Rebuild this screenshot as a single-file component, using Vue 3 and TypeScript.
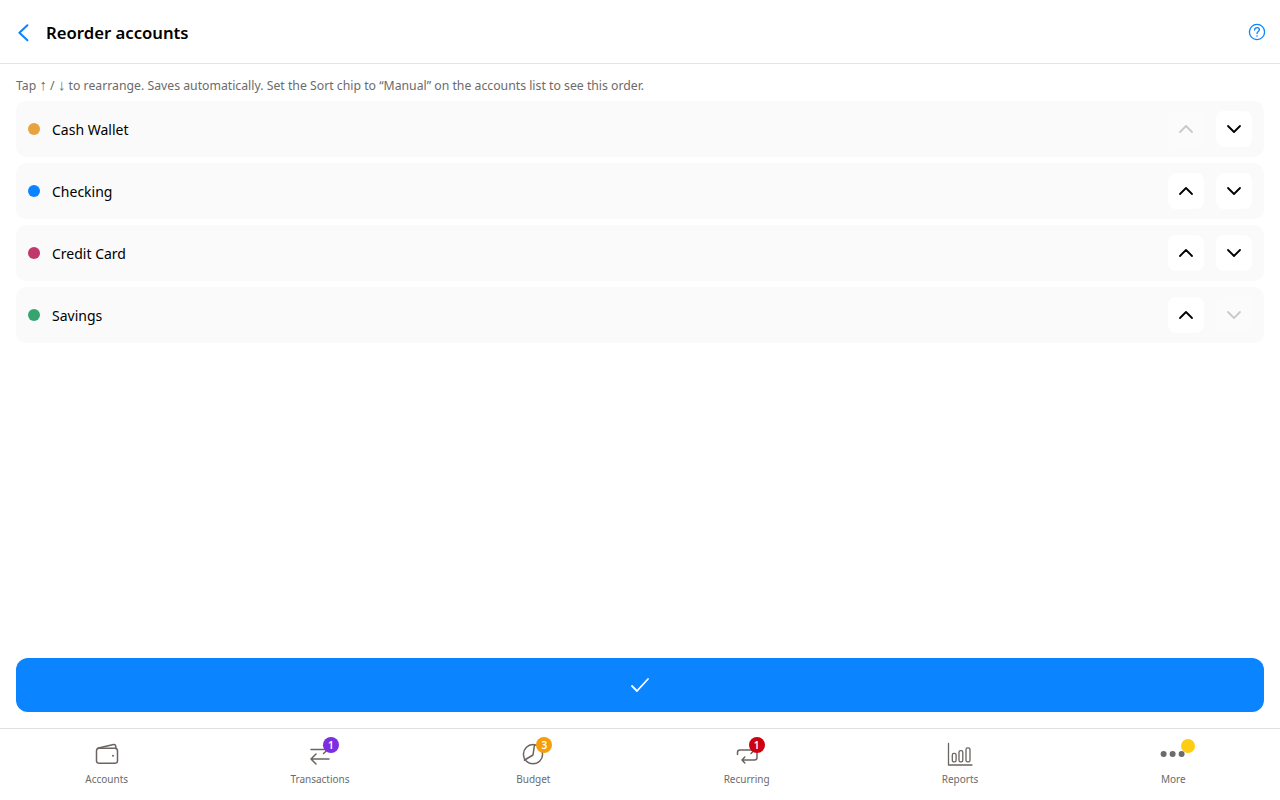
<script setup lang="ts">
interface Account {
  name: string
  color: string
}

const accounts: Account[] = [
  { name: 'Cash Wallet', color: '#e8a33d' },
  { name: 'Checking', color: '#0a84ff' },
  { name: 'Credit Card', color: '#c2386b' },
  { name: 'Savings', color: '#34a56f' },
]

const tabs = [
  { key: 'accounts', label: 'Accounts' },
  { key: 'transactions', label: 'Transactions', badge: '1', badgeColor: '#7c2fe0' },
  { key: 'budget', label: 'Budget', badge: '3', badgeColor: '#f59e0b' },
  { key: 'recurring', label: 'Recurring', badge: '1', badgeColor: '#cc0010' },
  { key: 'reports', label: 'Reports' },
  { key: 'more', label: 'More', dot: true },
]
</script>

<template>
  <div class="screen">
    <header class="topbar">
      <button class="back" aria-label="Back">
        <svg width="16" height="20" viewBox="0 0 16 20" fill="none">
          <path d="M11.4 3.3 L3.4 10.8 L11.4 18.3" stroke="#0a84ff" stroke-width="2.1" stroke-linecap="round" stroke-linejoin="round" />
        </svg>
      </button>
      <h1 class="title">Reorder accounts</h1>
      <button class="help" aria-label="Help">
        <svg width="18" height="18" viewBox="0 0 18 18" fill="none">
          <circle cx="9" cy="9" r="7.6" stroke="#0a84ff" stroke-width="1.3" />
          <path d="M6.6 7 C6.6 5.5 7.7 4.6 9 4.6 C10.4 4.6 11.4 5.6 11.4 6.8 C11.4 8.5 9 8.6 9 10.6" stroke="#0a84ff" stroke-width="1.3" stroke-linecap="round" />
          <circle cx="9" cy="13" r="0.8" fill="#0a84ff" />
        </svg>
      </button>
    </header>

    <main class="content">
      <p class="hint">Tap <span class="glyph">↑</span> / <span class="glyph">↓</span> to rearrange. Saves automatically. Set the Sort chip to “Manual” on the accounts list to see this order.</p>
      <ul class="list">
        <li v-for="(acc, i) in accounts" :key="acc.name" class="row">
          <span class="dot" :style="{ background: acc.color }"></span>
          <span class="name">{{ acc.name }}</span>
          <button class="arrow" :class="{ off: i === 0 }" :disabled="i === 0" aria-label="Move up">
            <svg width="16" height="10" viewBox="0 0 16 10" fill="none">
              <path d="M2 8 L8 2 L14 8" stroke="currentColor" stroke-width="1.8" stroke-linecap="round" stroke-linejoin="round" />
            </svg>
          </button>
          <button class="arrow" :class="{ off: i === accounts.length - 1 }" :disabled="i === accounts.length - 1" aria-label="Move down">
            <svg width="16" height="10" viewBox="0 0 16 10" fill="none">
              <path d="M2 2 L8 8 L14 2" stroke="currentColor" stroke-width="1.8" stroke-linecap="round" stroke-linejoin="round" />
            </svg>
          </button>
        </li>
      </ul>
      <button class="save" aria-label="Save">
        <svg width="20" height="16" viewBox="0 0 20 16" fill="none">
          <path d="M2 9 L7 14 L18 2" stroke="#fff" stroke-width="1.8" stroke-linecap="round" stroke-linejoin="round" />
        </svg>
      </button>
    </main>

    <nav class="tabbar">
      <div v-for="tab in tabs" :key="tab.key" class="tab">
        <span class="icon">
          <svg v-if="tab.key === 'accounts'" width="26" height="26" viewBox="0 0 26 26" fill="none" stroke="#6b6460" stroke-width="1.5" stroke-linejoin="round">
            <rect x="2.5" y="7.3" width="21" height="15" rx="2.6" />
            <path d="M3.5 7.3 L19.5 3.6 Q21.4 3.3 21.7 5 L22 7.3" />
            <circle cx="19" cy="14.8" r="1" fill="#6b6460" stroke="none" />
          </svg>
          <svg v-else-if="tab.key === 'transactions'" width="26" height="26" viewBox="0 0 26 26" fill="none" stroke="#6b6460" stroke-width="1.5" stroke-linecap="round" stroke-linejoin="round">
            <path d="M4 8.5 L21 8.5 M16.5 4.5 L21 8.5 L16.5 12.5" />
            <path d="M22 18 L4 18 M9 13 L4 18 L9 23" />
          </svg>
          <svg v-else-if="tab.key === 'budget'" width="26" height="26" viewBox="0 0 26 26" fill="none" stroke="#6b6460" stroke-width="1.5" stroke-linejoin="round">
            <circle cx="13" cy="13.2" r="9.6" />
            <path d="M14.5 3.6 L13 14 L3.8 19.5" />
          </svg>
          <svg v-else-if="tab.key === 'recurring'" width="26" height="26" viewBox="0 0 26 26" fill="none" stroke="#6b6460" stroke-width="1.5" stroke-linecap="round" stroke-linejoin="round">
            <path d="M3.5 13.5 L3.5 11.5 Q3.5 9 6 9 L20 9 M17 5.5 L20.5 9 L17 12.5" />
            <path d="M23 12 L23 16.5 Q23 19 20.5 19 L8 19 M10.8 16 L8 19 L10.8 22" />
          </svg>
          <svg v-else-if="tab.key === 'reports'" width="26" height="26" viewBox="0 0 26 26" fill="none" stroke="#6b6460" stroke-width="1.3" stroke-linecap="round" stroke-linejoin="round">
            <path d="M1.5 2.5 L1.5 24 L25 24" />
            <rect x="5.3" y="12.3" width="3.8" height="8.6" rx="1.6" />
            <rect x="12" y="9.6" width="3.8" height="11.3" rx="1.6" />
            <rect x="19" y="6.9" width="4" height="14" rx="1.6" />
          </svg>
          <svg v-else width="26" height="26" viewBox="0 0 26 26" fill="#6b6b6b">
            <circle cx="3.6" cy="13" r="3" />
            <circle cx="12.6" cy="13" r="3" />
            <circle cx="21.6" cy="13" r="3" />
          </svg>
          <span v-if="tab.badge" class="badge" :style="{ background: tab.badgeColor }">{{ tab.badge }}</span>
          <span v-if="tab.dot" class="ping"></span>
        </span>
        <span class="label">{{ tab.label }}</span>
      </div>
    </nav>
  </div>
</template>

<style>
html, body {
  margin: 0;
  background: #fff;
}
</style>

<style scoped>
.screen {
  width: 1280px;
  height: 800px;
  display: flex;
  flex-direction: column;
  font-family: "Noto Sans", "Open Sans", sans-serif;
  color: #000;
  overflow: hidden;
}

button {
  border: 0;
  padding: 0;
  background: none;
  display: flex;
  align-items: center;
  justify-content: center;
}

.topbar {
  height: 63px;
  flex: none;
  display: flex;
  align-items: center;
  padding: 0 14px 0 16px;
  border-bottom: 1px solid #e5e5e5;
}

.back {
  width: 16px;
  height: 20px;
}

.title {
  margin: 0 0 0 14px;
  padding-top: 1px;
  flex: 1;
  font-size: 16.7px;
  font-weight: 600;
}

.help {
  width: 18px;
  height: 18px;
}

.content {
  flex: 1;
  display: flex;
  flex-direction: column;
  padding: 14px 16px 16px;
  min-height: 0;
}

.hint {
  margin: 0 0 7px;
  font-size: 12.25px;
  line-height: 16px;
  color: #6b6b6b;
}

.glyph {
  font-size: 15px;
  line-height: 0;
}

.list {
  list-style: none;
  margin: 0;
  padding: 0;
  display: flex;
  flex-direction: column;
  gap: 6px;
}

.row {
  height: 56px;
  box-sizing: border-box;
  display: flex;
  align-items: center;
  gap: 12px;
  padding: 0 12px;
  background: #fafafa;
  border-radius: 10px;
}

.dot {
  width: 12px;
  height: 12px;
  border-radius: 50%;
}

.name {
  flex: 1;
  font-size: 14px;
}

.arrow {
  width: 36px;
  height: 36px;
  border-radius: 8px;
  background: #fff;
  color: #000;
}

.arrow.off {
  color: #c9c9c9;
  background: #fbfbfb;
}

.save {
  margin-top: auto;
  height: 54px;
  width: 100%;
  flex: none;
  background: #0a84ff;
  border-radius: 12px;
}

.tabbar {
  height: 71px;
  flex: none;
  display: grid;
  grid-template-columns: repeat(6, 1fr);
  border-top: 1px solid #e0e0e0;
}

.tab {
  display: flex;
  flex-direction: column;
  align-items: center;
  padding-top: 12px;
}

.icon {
  position: relative;
  width: 26px;
  height: 26px;
}

.label {
  margin-top: 5px;
  font-size: 10px;
  line-height: 14px;
  color: #6b6b6b;
}

.badge {
  position: absolute;
  top: -4px;
  right: -6px;
  width: 16px;
  height: 16px;
  border-radius: 50%;
  color: #fff;
  font-size: 10px;
  font-weight: 600;
  line-height: 16px;
  text-align: center;
}

.tab:nth-child(4) .badge {
  right: -5px;
}

.ping {
  position: absolute;
  top: -2px;
  right: -9px;
  width: 14px;
  height: 14px;
  border-radius: 50%;
  background: #ffcc14;
}
</style>
